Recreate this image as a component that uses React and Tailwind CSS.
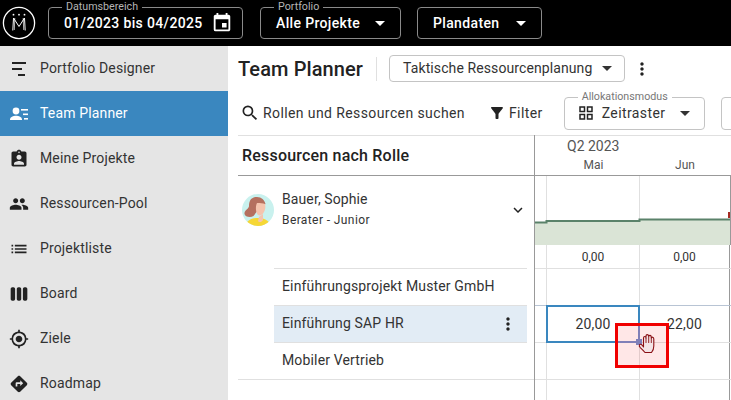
import React from "react";
import {
  MdEvent, MdArrowDropDown, MdMoreVert, MdSearch, MdFilterAlt, MdGridView, MdExpandMore,
  MdAssignmentInd, MdPeople, MdList, MdViewWeek, MdGpsFixed, MdDirections,
} from "react-icons/md";

function DesignerIcon() {
  return (
    <svg width="20" height="20" viewBox="0 0 20 20" fill="#222">
      <rect x="3" y="3" width="14" height="2" />
      <rect x="3" y="9" width="10" height="2" />
      <rect x="9" y="15" width="7" height="2" />
    </svg>
  );
}
function PlannerIcon() {
  return (
    <svg width="20" height="20" viewBox="0 0 20 20" fill="#fff">
      <circle cx="7" cy="7" r="3.4" />
      <path d="M1 15.5c0-2.6 3.4-3.8 6-3.8s6 1.2 6 3.8V16H1z" />
      <rect x="12" y="5" width="7" height="1.6" />
      <rect x="14" y="9.5" width="5" height="1.6" />
      <rect x="15" y="14" width="4" height="1.6" />
    </svg>
  );
}
function Logo() {
  return (
    <svg width="34" height="34" viewBox="0 0 34 34" fill="none" stroke="#fff">
      <circle cx="17" cy="17" r="15.6" strokeWidth="1.3" />
      <path d="M10.8 24.500 L11.500 12 L17 20.500 L22.500 12 L23.200 24.500" strokeWidth="1" />
      <path d="M12.800 12 L12.300 24" strokeWidth="0.7" />
      <path d="M21.200 12 L21.700 24" strokeWidth="0.7" />
      <circle cx="11.500" cy="8.700" r="0.9" fill="#fff" stroke="none" />
      <circle cx="17" cy="8.700" r="0.9" fill="#fff" stroke="none" />
      <circle cx="22.500" cy="8.700" r="0.9" fill="#fff" stroke="none" />
    </svg>
  );
}
function Avatar() {
  return (
    <svg width="32" height="32" viewBox="0 0 32 32" className="shrink-0">
      <clipPath id="av"><circle cx="16" cy="16" r="16" /></clipPath>
      <g clipPath="url(#av)">
        <rect width="32" height="32" fill="#c9f1ee" />
        <path d="M4 32c0-5 5-8 12-8 7 0 12 3 12 8z" fill="#f6d735" />
        <path d="M17 23l4-3v6c-1 2-4 3-5 1z" fill="#f5c4ae" />
        <path d="M15 3c-6 0-8 4-8 9 0 3-5 4-4.500 8 .5 3 6 4 9 2l6-8 6-4c-1-4-4-7-8.500-7z" fill="#b5705f" />
        <path d="M15 9c3 0 6 0 8 1 .8 3 .2 6-1 8-1.500 3-4 4-6 3-2-2-3-8-1-12z" fill="#f5c4ae" />
      </g>
    </svg>
  );
}
function Hand() {
  return (
    <svg width="20" height="22" viewBox="0 0 20 22" fill="#f3e4e6" stroke="#8a0f14" strokeWidth="1.1" strokeLinejoin="round">
      <path d="M6.500 14 L6.500 5 Q6.500 3.500 7.800 3.500 Q9 3.500 9 5 L9 3 Q9 1.600 10.300 1.600 Q11.500 1.600 11.600 3 L11.700 3.500 Q11.900 2.300 13 2.400 Q14.200 2.500 14.200 4 L14.300 5 Q14.600 4 15.700 4.200 Q16.800 4.500 16.800 6 L16.800 13 Q16.800 17 14.500 19.500 L8 19.500 Q6 17 3.500 14.800 Q1.600 13 2.500 11.700 Q3.500 10.700 5 12 Z" />
      <path d="M9 5 L9 10 M11.700 3.500 L11.700 10 M14.300 5 L14.300 10" fill="none" strokeWidth="0.9" />
    </svg>
  );
}

function HeaderField({ label, children, className }) {
  return (
    <div className={`relative h-[32px] border border-[#8a8a8a] rounded-[4px] flex items-center text-white font-medium text-[14px] tracking-[0.35px] whitespace-nowrap ${className}`}>
      {label && (
        <span className="absolute left-[13px] -top-[8px] bg-black px-[4px] text-[10.7px] leading-[13px] font-normal tracking-normal text-[#b5b5b5]">
          {label}
        </span>
      )}
      {children}
    </div>
  );
}

const nav = [
  [<DesignerIcon />, "Portfolio Designer"],
  [<PlannerIcon />, "Team Planner", true],
  [<MdAssignmentInd size={20} />, "Meine Projekte"],
  [<MdPeople size={20} />, "Ressourcen-Pool"],
  [<MdList size={20} />, "Projektliste"],
  [<MdViewWeek size={20} />, "Board"],
  [<MdGpsFixed size={20} />, "Ziele"],
  [<MdDirections size={20} />, "Roadmap"],
];

function TimeRow({ className = "", mai, jun }) {
  return (
    <div className={`flex ${className}`}>
      <div className="w-[12px] border-r border-[#e0e0e0]" />
      <div className="relative w-[93px] border-r border-[#e0e0e0] flex items-center justify-center">{mai}</div>
      <div className="w-[90px] border-r border-[#999] flex items-center justify-center">{jun}</div>
    </div>
  );
}

export default function App() {
  return (
    <div className="relative w-[731px] h-[400px] overflow-hidden flex flex-col bg-white text-[#333] font-[family-name:Roboto,sans-serif]">
      <header className="h-[46px] shrink-0 bg-black flex items-center pl-[2px]">
        <Logo />
        <HeaderField label="Datumsbereich" className="ml-[12px] w-[195px] pl-[15px]">
          <span>01/2023 bis 04/2025</span>
          <MdEvent size={22} className="ml-[8px] text-white" />
        </HeaderField>
        <HeaderField label="Portfolio" className="ml-[17px] w-[141px] pl-[15px]">
          <span>Alle Projekte</span>
          <MdArrowDropDown size={24} className="ml-[8px]" />
        </HeaderField>
        <HeaderField className="ml-[16px] w-[125px] pl-[15px]">
          <span>Plandaten</span>
          <MdArrowDropDown size={24} className="ml-[10px]" />
        </HeaderField>
      </header>
      <div className="flex flex-1 min-h-0">
        <aside className="w-[228px] shrink-0 bg-[#e5e5e5]">
          {nav.map(([icon, text, active]) => (
            <div
              key={text}
              className={`h-[45px] flex items-center pl-[9px] gap-[11px] text-[14px] tracking-[0.15px] ${active ? "bg-[#3a87bf] text-white" : "text-[#333]"}`}
            >
              <span className={`w-[20px] flex justify-center ${active ? "text-white" : "text-[#222]"}`}>{icon}</span>
              {text}
            </div>
          ))}
        </aside>
        <main className="flex-1 min-w-0 flex flex-col">
          <div className="h-[45px] shrink-0 flex items-center pl-[10px] whitespace-nowrap">
            <h1 className="text-[20px] font-medium tracking-[0.1px] text-[#222]">Team Planner</h1>
            <div className="w-px h-[24px] bg-[#e0e0e0] ml-[13px]" />
            <div className="ml-[12px] w-[236px] h-[27px] -mt-[1px] border border-[#c4c4c4] rounded-[4px] flex items-center pl-[13px] text-[14px] tracking-[0.1px]">
              <span>Taktische Ressourcenplanung</span>
              <MdArrowDropDown size={24} className="ml-[3px]" />
            </div>
            <MdMoreVert size={20} className="ml-[7px] text-[#222]" />
          </div>
          <div className="h-[44px] shrink-0 flex items-center pl-[13px] text-[14px] tracking-[0.4px] whitespace-nowrap">
            <MdSearch size={20} className="text-[#222] -ml-[1px] shrink-0" />
            <span className="ml-[3px]">Rollen und Ressourcen suchen</span>
            <MdFilterAlt size={18} className="ml-[23px] text-[#222] shrink-0" />
            <span className="ml-[3px]">Filter</span>
            <div className="relative ml-[21px] w-[141px] h-[33px] border border-[#c4c4c4] rounded-[4px] flex items-center pl-[12px] shrink-0">
              <span className="absolute left-[13px] -top-[8px] bg-white px-[4px] text-[10.7px] leading-[13px] tracking-normal text-[#777]">Allokationsmodus</span>
              <MdGridView size={18} className="text-[#222]" />
              <span className="ml-[7px]">Zeitraster</span>
              <MdArrowDropDown size={24} className="ml-[8px]" />
            </div>
            <div className="ml-[16px] w-[60px] h-[33px] border border-[#c4c4c4] rounded-[4px] shrink-0" />
          </div>
          <div className="relative flex-1 min-h-0 flex">
            <div className="w-[306px] shrink-0 pl-[10px]">
              <div className="h-[41px] border-t border-b border-t-[#e0e0e0] border-b-[#999] flex items-center pl-[4px] text-[16px] tracking-[0.2px] font-medium text-[#222]">
                Ressourcen nach Rolle
              </div>
              <div className="h-[92px] flex pl-[4px] pt-[18px]">
                <Avatar />
                <div className="ml-[8px] -mt-[5px]">
                  <div className="text-[14px] leading-[20px] tracking-[0.1px]">Bauer, Sophie</div>
                  <div className="text-[12px] leading-[16px] mt-[3px] tracking-[0.4px]">Berater - Junior</div>
                </div>
                <MdExpandMore size={18} className="ml-[139px] mt-[7px] text-[#222]" />
              </div>
              <div className="pl-[36px] pr-[7px] text-[14px] tracking-[0.15px]">
                <div className="h-[37px] border-t border-[#e0e0e0] flex items-center pl-[8px] pb-[2px]">Einführungsprojekt Muster GmbH</div>
                <div className="h-[37px] border-t border-[#e0e0e0] bg-[#e2ecf5] flex items-center pl-[8px] justify-between pr-[9px] pb-[2px]">
                  <span>Einführung SAP HR</span>
                  <MdMoreVert size={20} className="text-[#222] mt-[2px]" />
                </div>
                <div className="h-[37px] border-t border-[#e0e0e0] flex items-center pl-[8px] pb-[2px]">Mobiler Vertrieb</div>
              </div>
              <div className="border-t border-[#e0e0e0]" />
            </div>
            <div className="w-[197px] shrink-0 border-l border-[#999] flex flex-col">
              <div className="h-[41px] border-t border-b border-t-[#e0e0e0] border-b-[#999] flex flex-col text-[#555]">
                <div className="pl-[32px] text-[14px] leading-[18px] mt-[1px]">Q2 2023</div>
                <div className="flex text-[12px] leading-[16px] mt-[2px]">
                  <div className="w-[12px]" />
                  <div className="w-[93px] text-center">Mai</div>
                  <div className="w-[90px] text-center">Jun</div>
                </div>
              </div>
              <svg width="196" height="69" viewBox="0 0 196 69" className="block shrink-0">
                <path d="M0 46 H12 V45 H105 V43 H195 V69 H0 Z" fill="#dae4d6" />
                <path d="M11.500 0 V45 M104.500 0 V43" stroke="#e0e0e0" />
                <path d="M0 46.500 H11.500 V45 H104.500 V43.500 H195" fill="none" stroke="#5a826a" strokeWidth="2" />
                <path d="M195.500 0 V69" stroke="#999" />
                <rect x="193" y="36" width="2" height="6" fill="#a52a22" />
              </svg>
              <TimeRow className="h-[24px] border-b border-[#e0e0e0] text-[12px]" mai="0,00" jun="0,00" />
              <TimeRow className="h-[37px] border-b border-[#b8c4d4]" />
              <TimeRow
                className="h-[37px] border-b border-[#e0e0e0] text-[14px] tracking-[0.2px]"
                mai={
                  <>
                    20,00
                    <span className="absolute -left-[1px] -top-[1px] w-[94px] h-[38px] border-2 border-[#3a87bf]" />
                  </>
                }
                jun="22,00"
              />
              <TimeRow className="h-[37px] border-b border-[#e0e0e0]" />
              <TimeRow className="flex-1" />
            </div>
            <div className="absolute left-[387px] top-[188px] w-[54px] h-[45px] border-[3px] border-[#f00000] bg-[#ff000018]">
              <span className="absolute left-[20px] top-0 w-[2px] h-[14px] bg-[#8080b8]" />
              <span className="absolute left-0 top-[15px] w-[20px] h-[2px] bg-[#8080b8]" />
              <span className="absolute left-[18px] top-[13px] w-[6px] h-[6px] bg-[#8080b8]" />
              <span className="absolute left-[19px] top-[7px]"><Hand /></span>
            </div>
          </div>
        </main>
      </div>
    </div>
  );
}
